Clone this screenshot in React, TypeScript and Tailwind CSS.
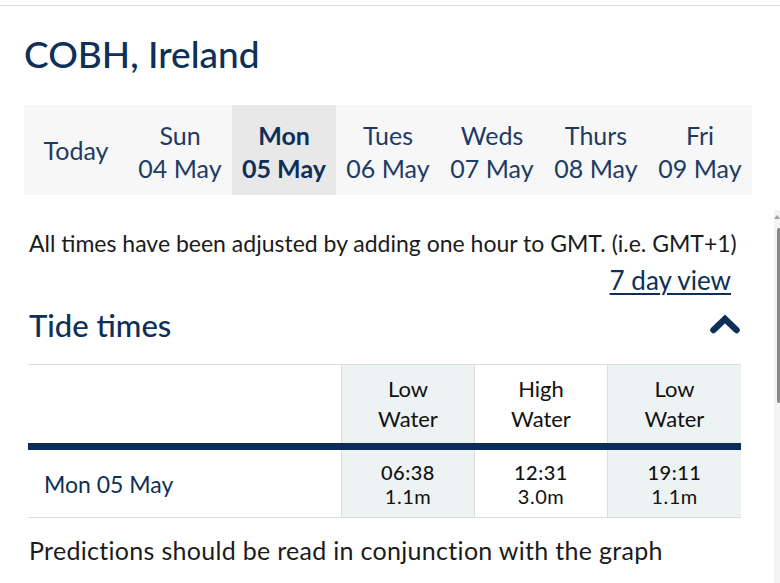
const days = [
  { name: 'Sun', date: '04 May' },
  { name: 'Mon', date: '05 May', active: true },
  { name: 'Tues', date: '06 May' },
  { name: 'Weds', date: '07 May' },
  { name: 'Thurs', date: '08 May' },
  { name: 'Fri', date: '09 May' },
]

const tides = [
  { kind: 'Low', time: '06:38', height: '1.1m', shaded: true },
  { kind: 'High', time: '12:31', height: '3.0m', shaded: false },
  { kind: 'Low', time: '19:11', height: '1.1m', shaded: true },
]

export default function App() {
  return (
    <div className="relative w-[780px] h-[583px] overflow-hidden bg-white font-['Lato','Liberation_Sans',sans-serif]">
      <div className="h-[5px]" />
      <div className="border-t border-[#dcdcdc]" />

      <h1 className="mt-[26px] ml-[24px] text-[37px] leading-[44px] font-medium text-[#0d2f58]">
        COBH, Ireland
      </h1>

      {/* day picker */}
      <div className="mt-[29px] ml-[24px] w-[728px] h-[90px] grid grid-cols-7 bg-[#f7f7f7] text-[25px] leading-[33px] text-[#1d3b63]">
        <div className="flex items-center justify-center">Today</div>
        {days.map((d) => (
          <div
            key={d.name}
            className={
              d.active
                ? 'flex flex-col items-center justify-center pt-[4px] bg-[#e8e8e8] font-bold text-[#0d2f58]'
                : 'flex flex-col items-center justify-center pt-[4px]'
            }
          >
            <span>{d.name}</span>
            <span>{d.date}</span>
          </div>
        ))}
      </div>

      <p className="mt-[33px] ml-[29px] text-[23px] leading-[30px] text-[#1b1b1b] whitespace-nowrap">
        All times have been adjusted by adding one hour to GMT. (i.e. GMT+1)
      </p>

      <div className="mt-[6px] w-[731px] flex justify-end">
        <a href="#" className="text-[26px] leading-[32px] text-[#0d2f58] underline underline-offset-[3px] decoration-[2px]">
          7 day view
        </a>
      </div>

      <div className="mt-[10px] ml-[29px] w-[710px] flex items-center justify-between">
        <h2 className="text-[31px] leading-[38px] font-medium text-[#0d2f58]">Tide times</h2>
        <svg width="30" height="20" viewBox="0 0 30 20" className="mt-[-2px] mr-[-1px]">
          <polyline points="3.5,16 15,5 26.5,16" fill="none" stroke="#0d2f58" strokeWidth="6.5" strokeLinejoin="miter" strokeLinecap="round" />
        </svg>
      </div>

      {/* tide table */}
      <div className="mt-[20px] ml-[28px] w-[713px] border-t border-b border-[#dcdcdc] text-[22px] text-[#111]">
        <div className="grid grid-cols-[313px_133px_133px_134px] h-[78px]">
          <div />
          {tides.map((t, i) => (
            <div
              key={i}
              className={
                t.shaded
                  ? 'flex flex-col items-center justify-center leading-[30px] border-l border-[#dcdcdc] bg-[#edf2f3]'
                  : 'flex flex-col items-center justify-center leading-[30px] border-l border-[#dcdcdc] bg-white'
              }
            >
              <span>{t.kind}</span>
              <span>Water</span>
            </div>
          ))}
        </div>
        <div className="h-[7px] bg-[#0b2d57]" />
        <div className="grid grid-cols-[313px_133px_133px_134px] h-[67px]">
          <div className="flex items-center pl-[16px] text-[23px] leading-[30px] text-[#0d2f58]">Mon 05 May</div>
          {tides.map((t, i) => (
            <div
              key={i}
              className={
                t.shaded
                  ? 'flex flex-col items-center justify-center text-[20px] leading-[24px] border-l border-[#dcdcdc] bg-[#edf2f3]'
                  : 'flex flex-col items-center justify-center text-[20px] leading-[24px] border-l border-[#dcdcdc] bg-white'
              }
            >
              <span className="font-medium tracking-[0.5px]">{t.time}</span>
              <span className="tracking-[0.5px]">{t.height}</span>
            </div>
          ))}
        </div>
      </div>

      <p className="mt-[17px] ml-[29px] text-[25px] leading-[30px] tracking-[0.3px] text-[#1b1b1b] whitespace-nowrap">
        Predictions should be read in conjunction with the graph
      </p>

      {/* inner scrollbar at right edge */}
      <div className="absolute right-0 top-[210px] bottom-0 w-[6px] bg-[#f4f4f4]">
        <div className="mx-auto mt-[5px] w-0 h-0 border-l-[3px] border-r-[3px] border-b-[4px] border-l-transparent border-r-transparent border-b-[#a0a0a0]" />
        <div className="ml-[3px] mt-[9px] w-[3px] h-[175px] rounded-l-[2px] bg-[#8a8a8a]" />
      </div>
    </div>
  )
}
